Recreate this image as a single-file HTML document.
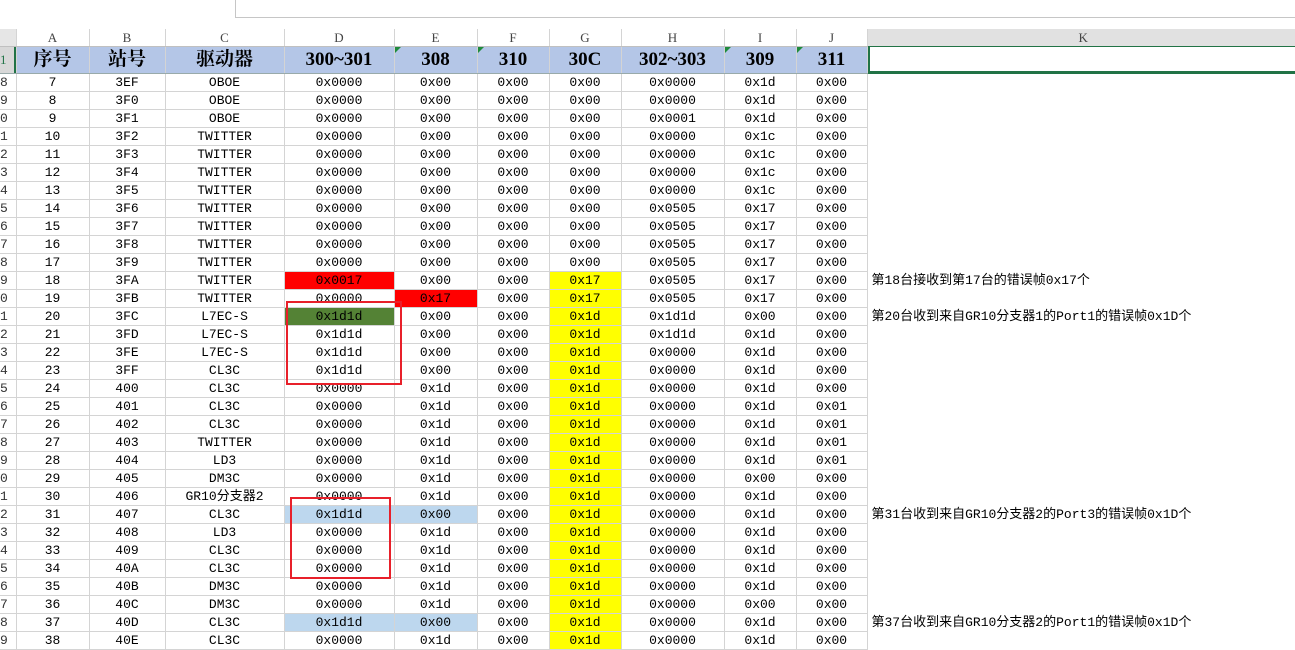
<!DOCTYPE html>
<html><head><meta charset="utf-8"><style>
body{margin:0;width:1295px;height:640px;overflow:hidden;background:#fff;position:relative;font-family:"Liberation Mono","Noto Sans CJK SC",monospace;}
.top{position:absolute;left:235px;top:-1px;width:1070px;height:18px;border:1px solid #c6c6c6;border-top:none;}
table{position:absolute;left:0;top:29px;border-collapse:collapse;table-layout:fixed;}
td{height:17px;padding:0;border-right:1px solid #d4d4d4;border-bottom:1px solid #d4d4d4;text-align:center;font-size:13px;line-height:17px;white-space:nowrap;overflow:hidden;color:#000;}
tr.ch td{background:#fff;color:#444;font-family:"Liberation Serif",serif;font-size:13px;height:17px;line-height:17px;border-bottom:1px solid #c0c0c0;}
tr.ch td.rn{background:#e6e6e6;}
tr.ch td.k{background:#e1e1e1;border-bottom:1px solid #217346;}
tr.h td{background:#b4c6e7;height:26px;line-height:26px;font-family:"Liberation Serif","Noto Serif CJK SC",serif;font-weight:bold;font-size:19px;border-bottom:1px solid #9aa;position:relative;}
tr.h td.rn{background:#d8d8d8;color:#217346;font-size:13px;font-weight:normal;text-align:left;box-shadow:inset -2px 0 0 #217346;}
tr.h td.k{background:#fff;box-shadow:inset 2px 0 0 #217346,inset 0 -2px 0 #217346;border-bottom:1px solid #217346;}
td.rn{text-align:left;color:#333;background:#fff;padding-left:0;}
td.k{border-bottom:none;border-right:none;text-align:left;padding-left:4px;font-family:"Liberation Mono","Noto Sans CJK SC",monospace;}
.y{background:#ffff00;}.r{background:#ff0000;}.g{background:#548235;}.b{background:#bdd7ee;}
.tri{position:absolute;left:0;top:0;width:0;height:0;border-top:6px solid #1f8a3c;border-right:6px solid transparent;}
.box{position:absolute;border:2px solid #e8202a;}
</style></head><body>
<div class="top"></div>
<table>
<colgroup><col style="width:16px"><col style="width:73px"><col style="width:76px"><col style="width:119px"><col style="width:110px"><col style="width:83px"><col style="width:72px"><col style="width:72px"><col style="width:103px"><col style="width:72px"><col style="width:71px"><col style="width:428px"></colgroup>
<tr class="ch"><td class="rn"></td><td>A</td><td>B</td><td>C</td><td>D</td><td>E</td><td>F</td><td>G</td><td>H</td><td>I</td><td>J</td><td class="k" style="text-align:center">K</td></tr>
<tr class="h"><td class="rn">1</td><td>序号</td><td>站号</td><td>驱动器</td><td>300~301</td><td><span class="tri"></span>308</td><td><span class="tri"></span>310</td><td>30C</td><td>302~303</td><td><span class="tri"></span>309</td><td><span class="tri"></span>311</td><td class="k"></td></tr>
<tr><td class="rn">8</td><td>7</td><td>3EF</td><td>OBOE</td><td>0x0000</td><td>0x00</td><td>0x00</td><td>0x00</td><td>0x0000</td><td>0x1d</td><td>0x00</td><td class="k"></td></tr>
<tr><td class="rn">9</td><td>8</td><td>3F0</td><td>OBOE</td><td>0x0000</td><td>0x00</td><td>0x00</td><td>0x00</td><td>0x0000</td><td>0x1d</td><td>0x00</td><td class="k"></td></tr>
<tr><td class="rn">0</td><td>9</td><td>3F1</td><td>OBOE</td><td>0x0000</td><td>0x00</td><td>0x00</td><td>0x00</td><td>0x0001</td><td>0x1d</td><td>0x00</td><td class="k"></td></tr>
<tr><td class="rn">1</td><td>10</td><td>3F2</td><td>TWITTER</td><td>0x0000</td><td>0x00</td><td>0x00</td><td>0x00</td><td>0x0000</td><td>0x1c</td><td>0x00</td><td class="k"></td></tr>
<tr><td class="rn">2</td><td>11</td><td>3F3</td><td>TWITTER</td><td>0x0000</td><td>0x00</td><td>0x00</td><td>0x00</td><td>0x0000</td><td>0x1c</td><td>0x00</td><td class="k"></td></tr>
<tr><td class="rn">3</td><td>12</td><td>3F4</td><td>TWITTER</td><td>0x0000</td><td>0x00</td><td>0x00</td><td>0x00</td><td>0x0000</td><td>0x1c</td><td>0x00</td><td class="k"></td></tr>
<tr><td class="rn">4</td><td>13</td><td>3F5</td><td>TWITTER</td><td>0x0000</td><td>0x00</td><td>0x00</td><td>0x00</td><td>0x0000</td><td>0x1c</td><td>0x00</td><td class="k"></td></tr>
<tr><td class="rn">5</td><td>14</td><td>3F6</td><td>TWITTER</td><td>0x0000</td><td>0x00</td><td>0x00</td><td>0x00</td><td>0x0505</td><td>0x17</td><td>0x00</td><td class="k"></td></tr>
<tr><td class="rn">6</td><td>15</td><td>3F7</td><td>TWITTER</td><td>0x0000</td><td>0x00</td><td>0x00</td><td>0x00</td><td>0x0505</td><td>0x17</td><td>0x00</td><td class="k"></td></tr>
<tr><td class="rn">7</td><td>16</td><td>3F8</td><td>TWITTER</td><td>0x0000</td><td>0x00</td><td>0x00</td><td>0x00</td><td>0x0505</td><td>0x17</td><td>0x00</td><td class="k"></td></tr>
<tr><td class="rn">8</td><td>17</td><td>3F9</td><td>TWITTER</td><td>0x0000</td><td>0x00</td><td>0x00</td><td>0x00</td><td>0x0505</td><td>0x17</td><td>0x00</td><td class="k"></td></tr>
<tr><td class="rn">9</td><td>18</td><td>3FA</td><td>TWITTER</td><td class="r">0x0017</td><td>0x00</td><td>0x00</td><td class="y">0x17</td><td>0x0505</td><td>0x17</td><td>0x00</td><td class="k">第18台接收到第17台的错误帧0x17个</td></tr>
<tr><td class="rn">0</td><td>19</td><td>3FB</td><td>TWITTER</td><td>0x0000</td><td class="r">0x17</td><td>0x00</td><td class="y">0x17</td><td>0x0505</td><td>0x17</td><td>0x00</td><td class="k"></td></tr>
<tr><td class="rn">1</td><td>20</td><td>3FC</td><td>L7EC-S</td><td class="g">0x1d1d</td><td>0x00</td><td>0x00</td><td class="y">0x1d</td><td>0x1d1d</td><td>0x00</td><td>0x00</td><td class="k">第20台收到来自GR10分支器1的Port1的错误帧0x1D个</td></tr>
<tr><td class="rn">2</td><td>21</td><td>3FD</td><td>L7EC-S</td><td>0x1d1d</td><td>0x00</td><td>0x00</td><td class="y">0x1d</td><td>0x1d1d</td><td>0x1d</td><td>0x00</td><td class="k"></td></tr>
<tr><td class="rn">3</td><td>22</td><td>3FE</td><td>L7EC-S</td><td>0x1d1d</td><td>0x00</td><td>0x00</td><td class="y">0x1d</td><td>0x0000</td><td>0x1d</td><td>0x00</td><td class="k"></td></tr>
<tr><td class="rn">4</td><td>23</td><td>3FF</td><td>CL3C</td><td>0x1d1d</td><td>0x00</td><td>0x00</td><td class="y">0x1d</td><td>0x0000</td><td>0x1d</td><td>0x00</td><td class="k"></td></tr>
<tr><td class="rn">5</td><td>24</td><td>400</td><td>CL3C</td><td>0x0000</td><td>0x1d</td><td>0x00</td><td class="y">0x1d</td><td>0x0000</td><td>0x1d</td><td>0x00</td><td class="k"></td></tr>
<tr><td class="rn">6</td><td>25</td><td>401</td><td>CL3C</td><td>0x0000</td><td>0x1d</td><td>0x00</td><td class="y">0x1d</td><td>0x0000</td><td>0x1d</td><td>0x01</td><td class="k"></td></tr>
<tr><td class="rn">7</td><td>26</td><td>402</td><td>CL3C</td><td>0x0000</td><td>0x1d</td><td>0x00</td><td class="y">0x1d</td><td>0x0000</td><td>0x1d</td><td>0x01</td><td class="k"></td></tr>
<tr><td class="rn">8</td><td>27</td><td>403</td><td>TWITTER</td><td>0x0000</td><td>0x1d</td><td>0x00</td><td class="y">0x1d</td><td>0x0000</td><td>0x1d</td><td>0x01</td><td class="k"></td></tr>
<tr><td class="rn">9</td><td>28</td><td>404</td><td>LD3</td><td>0x0000</td><td>0x1d</td><td>0x00</td><td class="y">0x1d</td><td>0x0000</td><td>0x1d</td><td>0x01</td><td class="k"></td></tr>
<tr><td class="rn">0</td><td>29</td><td>405</td><td>DM3C</td><td>0x0000</td><td>0x1d</td><td>0x00</td><td class="y">0x1d</td><td>0x0000</td><td>0x00</td><td>0x00</td><td class="k"></td></tr>
<tr><td class="rn">1</td><td>30</td><td>406</td><td>GR10分支器2</td><td>0x0000</td><td>0x1d</td><td>0x00</td><td class="y">0x1d</td><td>0x0000</td><td>0x1d</td><td>0x00</td><td class="k"></td></tr>
<tr><td class="rn">2</td><td>31</td><td>407</td><td>CL3C</td><td class="b">0x1d1d</td><td class="b">0x00</td><td>0x00</td><td class="y">0x1d</td><td>0x0000</td><td>0x1d</td><td>0x00</td><td class="k">第31台收到来自GR10分支器2的Port3的错误帧0x1D个</td></tr>
<tr><td class="rn">3</td><td>32</td><td>408</td><td>LD3</td><td>0x0000</td><td>0x1d</td><td>0x00</td><td class="y">0x1d</td><td>0x0000</td><td>0x1d</td><td>0x00</td><td class="k"></td></tr>
<tr><td class="rn">4</td><td>33</td><td>409</td><td>CL3C</td><td>0x0000</td><td>0x1d</td><td>0x00</td><td class="y">0x1d</td><td>0x0000</td><td>0x1d</td><td>0x00</td><td class="k"></td></tr>
<tr><td class="rn">5</td><td>34</td><td>40A</td><td>CL3C</td><td>0x0000</td><td>0x1d</td><td>0x00</td><td class="y">0x1d</td><td>0x0000</td><td>0x1d</td><td>0x00</td><td class="k"></td></tr>
<tr><td class="rn">6</td><td>35</td><td>40B</td><td>DM3C</td><td>0x0000</td><td>0x1d</td><td>0x00</td><td class="y">0x1d</td><td>0x0000</td><td>0x1d</td><td>0x00</td><td class="k"></td></tr>
<tr><td class="rn">7</td><td>36</td><td>40C</td><td>DM3C</td><td>0x0000</td><td>0x1d</td><td>0x00</td><td class="y">0x1d</td><td>0x0000</td><td>0x00</td><td>0x00</td><td class="k"></td></tr>
<tr><td class="rn">8</td><td>37</td><td>40D</td><td>CL3C</td><td class="b">0x1d1d</td><td class="b">0x00</td><td>0x00</td><td class="y">0x1d</td><td>0x0000</td><td>0x1d</td><td>0x00</td><td class="k">第37台收到来自GR10分支器2的Port1的错误帧0x1D个</td></tr>
<tr><td class="rn">9</td><td>38</td><td>40E</td><td>CL3C</td><td>0x0000</td><td>0x1d</td><td>0x00</td><td class="y">0x1d</td><td>0x0000</td><td>0x1d</td><td>0x00</td><td class="k"></td></tr>
</table>
<div class="box" style="left:286px;top:301px;width:112px;height:80px"></div>
<div class="box" style="left:290px;top:497px;width:97px;height:78px"></div>
</body></html>
